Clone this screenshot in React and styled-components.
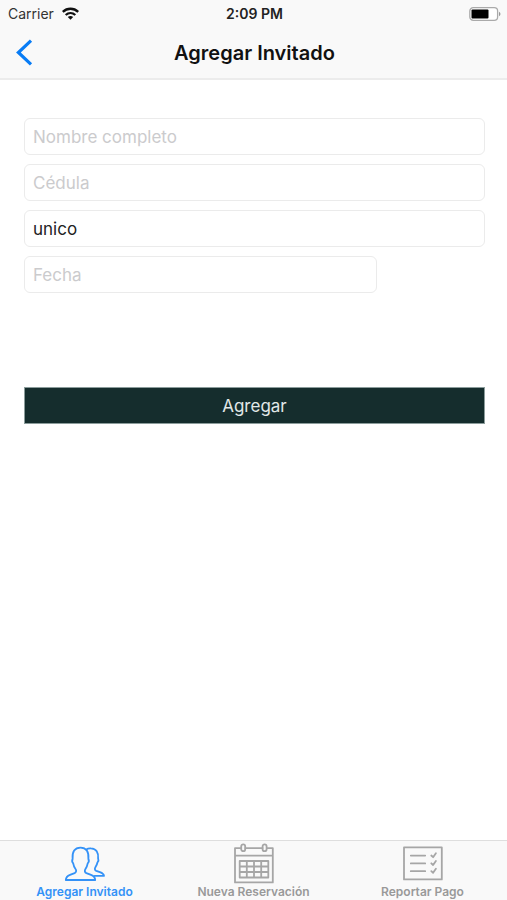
import React from "react";
import styled, { createGlobalStyle } from "styled-components";

const GlobalStyle = createGlobalStyle`
  *, *::before, *::after { box-sizing: border-box; }
  body {
    margin: 0;
    background: #fff;
    color: #111;
    font-family: Inter, "Liberation Sans", sans-serif;
  }
`;

const Screen = styled.div`
  display: flex;
  flex-direction: column;
  min-height: 100vh;
`;

const Header = styled.header`
  background: #f9f9f9;
  border-bottom: 2px solid #ececec;
`;

const StatusBar = styled.div`
  display: grid;
  grid-template-columns: 1fr auto 1fr;
  align-items: center;
  height: 27px;
  padding: 0 6px 0 8px;
  font-size: 14px;
  line-height: 20px;
`;

const Carrier = styled.div`
  display: flex;
  align-items: center;
  gap: 8px;
  color: #333;
`;

const Clock = styled.time`
  font-weight: 600;
  color: #222;
`;

const Battery = styled.svg`
  justify-self: end;
`;

const NavBar = styled.div`
  display: grid;
  grid-template-columns: 1fr auto 1fr;
  align-items: center;
  height: 51px;
  padding: 0 14px 0 16px;
`;

const BackButton = styled.button`
  justify-self: start;
  display: flex;
  padding: 0;
  border: 0;
  background: none;
  cursor: pointer;
`;

const Title = styled.h1`
  margin: 0;
  font-size: 20px;
  line-height: 24px;
  font-weight: 600;
`;

const Form = styled.form`
  flex: 1;
  display: flex;
  flex-direction: column;
  gap: 9px;
  padding: 38px 22px 24px 24px;
`;

const Field = styled.input`
  width: ${({ $short }) => ($short ? "calc(100% - 108px)" : "100%")};
  height: 37px;
  padding: 0 8px;
  border: 1px solid #ebebeb;
  border-radius: 6px;
  background: #fff;
  color: #222;
  font-family: inherit;
  font-size: 17px;
  &::placeholder { color: #cbcbcd; opacity: 1; }
`;

const SubmitButton = styled.button`
  height: 37px;
  margin-top: 85px;
  padding: 0;
  border: 1px solid #8b9c9b;
  background: #152d2d;
  color: #e2e8e8;
  font-family: inherit;
  font-size: 17px;
  cursor: pointer;
`;

const TabBar = styled.nav`
  display: grid;
  grid-template-columns: repeat(3, 1fr);
  height: 60px;
  border-top: 1px solid #dedede;
  background: #f9f9f9;
`;

const Tab = styled.a`
  display: flex;
  flex-direction: column;
  align-items: center;
  padding-top: 2px;
  color: ${({ $active }) => ($active ? "#3492f7" : "#999")};
  font-size: 12px;
  line-height: 16px;
  font-weight: 600;
  text-decoration: none;
`;

const TabIcon = styled.svg`
  width: 42px;
  height: 41px;
  fill: none;
  stroke: ${({ $active }) => ($active ? "#3492f7" : "#a6a6a6")};
  stroke-width: 1.8;
  stroke-linecap: round;
  stroke-linejoin: round;
`;

function WifiIcon() {
  return (
    <svg width="17" height="13" viewBox="0 0 17 13" fill="none" stroke="#111" strokeWidth="2.3" aria-hidden="true">
      <path d="M.8 4.9C5.2.7 11.8.7 16.2 4.9" />
      <path d="M3.7 8C6.5 5.4 10.5 5.4 13.3 8" />
      <path d="M5.8 10.1c1.6-1.5 3.8-1.5 5.4 0L8.5 12.8z" fill="#111" stroke="none" />
    </svg>
  );
}

function BatteryIcon() {
  return (
    <Battery width="32" height="14" viewBox="0 0 32 14" role="img" aria-label="Batería">
      <rect x=".8" y=".7" width="27.8" height="12.6" rx="3.4" fill="#fff" stroke="#aaa" strokeWidth="1.3" />
      <rect x="2.5" y="2.4" width="17" height="9.2" rx="1" fill="#000" />
      <path d="M30 4.8c2 .8 2 3.6 0 4.4z" fill="#999" />
    </Battery>
  );
}

function GuestsIcon() {
  return (
    <TabIcon viewBox="0 0 42 41" aria-hidden="true" $active>
      <path d="M1.8 37c.2-3.1 1.3-4 4.2-5.1l4.6-1.8c1.5-.7 2-2.2 1.2-3.6-1.6-2-2.2-3.7-2.6-6.2-1.2-1.2-1.2-3-.6-4.3C8 8.8 10.7 4.6 16.5 4.6S25 8.8 24.4 16c.7 1.5.5 3.3-.7 4.4-.4 2.4-1.1 4.2-2.5 6.1-.8 1.5-.3 2.9 1.2 3.6l4.6 1.8c3 1.1 4.1 2 4.2 5.1z" />
      <path d="M22.2 6.5c1.4-.9 2.9-1.3 4.8-1.1 5.3.2 7.6 4.2 7.1 10 .6 1.4.4 2.9-.6 3.9-.4 2-1 3.4-2.1 5-1 1.5-.5 2.9.9 3.5l3.6 1.4c2.7 1 3.8 1.6 4.1 3.7h-9.4" />
    </TabIcon>
  );
}

function CalendarIcon() {
  return (
    <TabIcon viewBox="0 0 42 41" aria-hidden="true">
      <path d="M8 5.1H2v34.3h37.8V5.1h-5.9M12.4 5.1h17.1M2 12.7h37.8" />
      <rect x="8.2" y="1.4" width="4" height="6.8" rx="2" />
      <rect x="29.6" y="1.4" width="4" height="6.8" rx="2" />
      <path d="M6.7 18h28.6v16.5H6.7zM13.8 18v16.5M21 18v16.5M28.2 18v16.5M6.7 23.5h28.6M6.7 29h28.6" />
    </TabIcon>
  );
}

function ReportIcon() {
  return (
    <TabIcon viewBox="0 0 42 41" aria-hidden="true">
      <path d="M2 4.4h37.8v32H2zM8.8 12.6h14.4M8.8 20.4h14.4M8.8 28.2h14.4" />
      <path d="m29.3 12.5 1.8 1.7 2.8-4M29.3 20.3l1.8 1.7 2.8-4M29.3 28.1l1.8 1.7 2.8-4" />
    </TabIcon>
  );
}

export default function App() {
  return (
    <>
      <GlobalStyle />
      <Screen>
        <Header>
          <StatusBar>
            <Carrier>Carrier <WifiIcon /></Carrier>
            <Clock>2:09 PM</Clock>
            <BatteryIcon />
          </StatusBar>
          <NavBar>
            <BackButton type="button" aria-label="Volver">
              <svg width="17" height="28" viewBox="0 0 17 28" fill="none" stroke="#087cf5" strokeWidth="3.2" aria-hidden="true">
                <path d="M15 1.7 2.4 13.5 15 25.3" />
              </svg>
            </BackButton>
            <Title>Agregar Invitado</Title>
          </NavBar>
        </Header>
        <Form onSubmit={(event) => event.preventDefault()}>
          <Field type="text" placeholder="Nombre completo" aria-label="Nombre completo" />
          <Field type="text" placeholder="Cédula" aria-label="Cédula" />
          <Field type="text" defaultValue="unico" aria-label="Tipo de invitación" />
          <Field type="text" placeholder="Fecha" aria-label="Fecha" $short />
          <SubmitButton type="submit">Agregar</SubmitButton>
        </Form>
        <TabBar>
          <Tab href="#invitado" aria-current="page" $active><GuestsIcon />Agregar Invitado</Tab>
          <Tab href="#reservacion"><CalendarIcon />Nueva Reservación</Tab>
          <Tab href="#pago"><ReportIcon />Reportar Pago</Tab>
        </TabBar>
      </Screen>
    </>
  );
}
